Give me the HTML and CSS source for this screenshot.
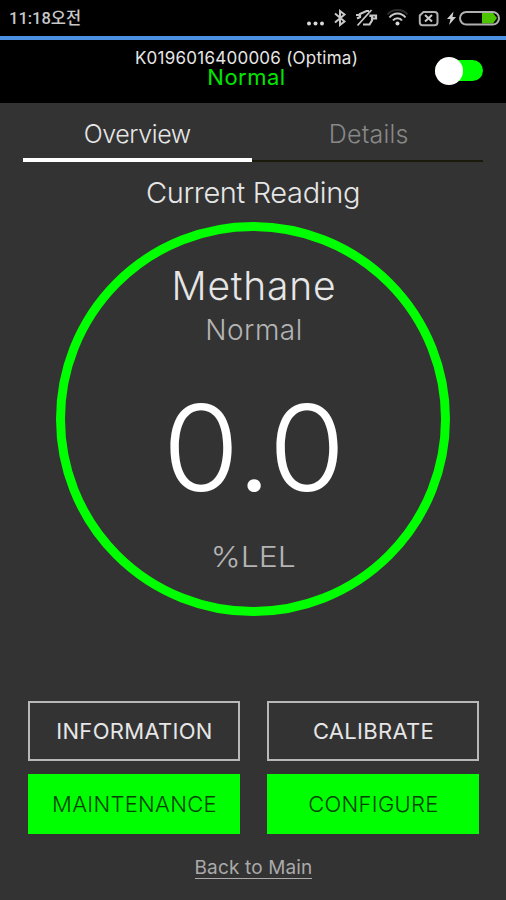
FILE: index.html
```
<!DOCTYPE html>
<html lang="en">
<head>
    <meta charset="UTF-8">
    <meta name="viewport" content="width=device-width, initial-scale=1.0">
    <title>Current Reading</title>
    <link rel="stylesheet" href="styles.css">
</head>
<body>

    <div class="status-bar">
        <span class="time">11:18오전</span>
        <svg class="status-icons" width="200" height="36" viewBox="0 0 200 36" fill="none" stroke="#c8c8c8" stroke-width="2">
            <!-- more -->
            <g fill="#d8d8d8" stroke="none">
                <circle cx="9" cy="23.500" r="2"/>
                <circle cx="15.500" cy="23.500" r="2"/>
                <circle cx="22" cy="23.500" r="2"/>
            </g>
            <!-- bluetooth -->
            <path d="M35 13.500 L44.500 21.500 L40 25 V11 L44.500 14.500 L35 22.500"/>
            <!-- muted -->
            <path d="M71.500 10 L57.500 25.500" stroke-width="1.800"/>
            <path d="M56 15 H60 M57 18.500 L60 17 V14 L66.500 11 H69 M70.500 14.500 V17 M63 24.500 H69.500 L72 20.500 V15.500 H76 V18.500 H73" stroke-width="2.200"/>
            <!-- wifi -->
            <path d="M87.500 14.500 C92 8.500 103 8.500 107.500 14.500" stroke="#2c2c2c"/>
            <path d="M89.500 17.500 C93.500 12 101.500 12 105.500 17.500 M93 20.500 C95 17.500 100 17.500 102 20.500"/>
            <circle cx="97.500" cy="23.500" r="2" fill="#d8d8d8" stroke="none"/>
            <!-- no sim -->
            <path d="M123.500 12 H134.500 Q137.500 12 137.500 15 V22.500 Q137.500 25.200 134.500 25.200 H122.500 Q119.800 25.200 119.800 22.500 V15.500 Z" stroke="#b0b0b0"/>
            <path d="M125 15 L132 21.500 M132 15 L125 21.500"/>
            <!-- charging battery -->
            <path d="M153.500 11.500 L147 19 H150.500 L149 25 L156 17 H152.500 Z" fill="#d0d0d0" stroke="none"/>
            <path d="M182 13 H193 L197 18 L193 23.500 H182 Z" fill="#4cc400" stroke="none"/>
            <rect x="160" y="12" width="39" height="12.500" rx="6.250" stroke="#b0b0b0"/>
        </svg>
    </div>

    <div class="header">
        <div class="device">
            <span class="device-id">K0196016400006 (Optima)</span>
            <span class="device-state">Normal</span>
        </div>
        <div class="toggle"><div class="knob"></div></div>
    </div>

    <div class="container">
        <div class="tabs">
            <div class="tab active">Overview</div>
            <div class="tab">Details</div>
        </div>

        <h1>Current Reading</h1>

        <div class="gauge">
            <span class="gas">Methane</span>
            <span class="state">Normal</span>
            <span class="value">0.0</span>
            <span class="unit">%LEL</span>
        </div>

        <div class="buttons">
            <button class="outline">INFORMATION</button>
            <button class="outline">CALIBRATE</button>
            <button class="solid">MAINTENANCE</button>
            <button class="solid">CONFIGURE</button>
        </div>

        <a class="back">Back to Main</a>
    </div>

</body>
</html>
```
FILE: styles.css
```
* {
    box-sizing: border-box;
}

body {
    font-family: Inter, "Noto Sans CJK KR", sans-serif;
    background-color: #333;
    margin: 0;
    height: 900px;
    color: #e6e6e6;
    overflow: hidden;
}

.status-bar {
    display: flex;
    justify-content: space-between;
    height: 40px;
    padding: 0 6px 0 9px;
    background-color: #000;
    border-bottom: 4px solid #4b90e2;
}

.time {
    font-family: Roboto, "Noto Sans CJK KR", sans-serif;
    font-size: 16.500px;
    font-weight: 500;
    line-height: 37px;
    color: #c8c8c8;
}

.header {
    display: grid;
    grid-template-columns: 1fr 234px 1fr;
    height: 63px;
    background-color: #000;
}

.device {
    grid-column: 2;
    display: flex;
    flex-direction: column;
    align-items: center;
    padding-top: 9px;
    white-space: nowrap;
}

.device-id {
    font-size: 17px;
    line-height: 18px;
    letter-spacing: 0.250px;
    margin-left: -13px;
}

.device-state {
    font-size: 22px;
    line-height: 20px;
    letter-spacing: 0.500px;
    color: #00e600;
    margin-left: -13px;
}

.toggle {
    display: flex;
    align-items: center;
    width: 48px;
    height: 21px;
    margin: 20px 0 0 65px;
    border-radius: 11px;
    background-color: #00ff00;
}

.knob {
    flex: none;
    width: 28px;
    height: 28px;
    border-radius: 50%;
    background-color: #fff;
}

.container {
    display: flex;
    flex-direction: column;
    align-items: center;
}

.tabs {
    display: flex;
    align-items: flex-end;
    width: 460px;
    height: 59px;
}

.tab {
    flex: 1;
    height: 57px;
    padding-left: 3px;
    font-size: 25px;
    font-weight: 300;
    line-height: 58px;
    letter-spacing: 0.200px;
    text-align: center;
    color: #888;
    border-bottom: 2px solid #1a1a0c;
}

.tab.active {
    padding-left: 0;
    letter-spacing: -0.400px;
    color: #e6e6e6;
    border-bottom: 4px solid #fff;
}

h1 {
    margin: 12px 0 0;
    font-size: 29px;
    font-weight: 300;
    line-height: 37px;
    letter-spacing: -0.350px;
}

.gauge {
    display: flex;
    flex-direction: column;
    align-items: center;
    width: 394px;
    height: 394px;
    margin-top: 11px;
    padding-top: 31px;
    border: 9px solid #00ff00;
    border-radius: 50%;
}

.gas {
    font-size: 39px;
    font-weight: 300;
    line-height: 48px;
    letter-spacing: 0.800px;
    margin-left: 2px;
}

.state {
    font-size: 28px;
    font-weight: 300;
    line-height: 40px;
    letter-spacing: 0.500px;
    margin-left: 2px;
    color: #b4b4b4;
}

.value {
    margin-top: 33px;
    margin-left: 2px;
    font-size: 120px;
    font-weight: 300;
    line-height: 130px;
    color: #fff;
    transform: scaleX(1.040);
}

.unit {
    margin-top: 24px;
    font-size: 28px;
    font-weight: 300;
    line-height: 40px;
    color: #b4b4b4;
    transform: scaleX(1.140);
}

.buttons {
    display: grid;
    grid-template-columns: 212px 212px;
    gap: 13px 27px;
    margin-top: 85px;
}

button {
    height: 60px;
    padding: 0 0 0 2px;
    border: none;
    font-family: inherit;
    font-size: 22px;
    letter-spacing: 0.300px;
}

.outline {
    background-color: transparent;
    border: 2px solid #b8b8b8;
    color: #e6e6e6;
}

.solid {
    background-color: #00ff00;
    color: #004400;
    font-weight: 300;
}

.back {
    margin-top: 23px;
    margin-left: 1px;
    font-size: 19px;
    line-height: 21px;
    letter-spacing: 0.150px;
    color: #aaa;
    border-bottom: 1px solid #aaa;
}
```
